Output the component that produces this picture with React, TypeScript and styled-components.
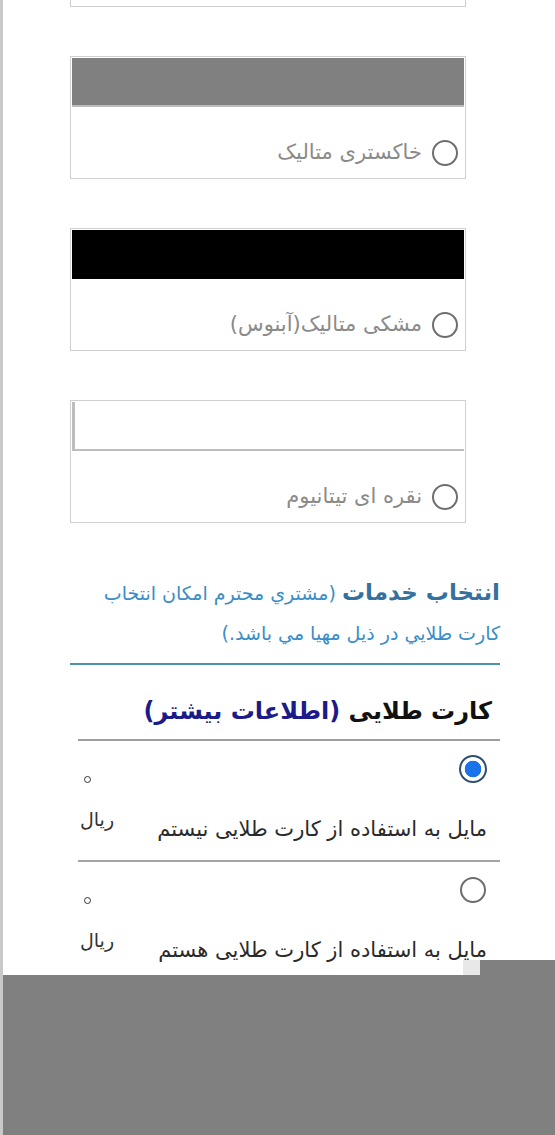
import React from 'react';
import styled, { createGlobalStyle } from 'styled-components';

const GlobalStyle = createGlobalStyle`
  html, body {
    margin: 0;
    padding: 0;
    background: #fff;
    font-family: "DejaVu Sans", "Noto Sans", sans-serif;
  }
  #root {
    min-height: 1135px;
  }
`;

const Page = styled.div`
  position: relative;
  width: 555px;
  height: 1135px;
  overflow: hidden;
  border-left: 3px solid #c9c9c9;
  box-sizing: border-box;
  background: #fff;
`;

const ColorList = styled.div`
  display: flex;
  flex-direction: column;
  gap: 49px;
  margin-top: -116px;
  margin-left: 67px;
`;

const ColorCard = styled.div`
  width: 396px;
  height: 123px;
  box-sizing: border-box;
  border: 1px solid #cfcfcf;
  padding: 1px;
  display: flex;
  flex-direction: column;
`;

const Swatch = styled.div<{ $color: string; $outlined?: boolean }>`
  height: 49px;
  background: ${(p) => p.$color};
  box-sizing: border-box;
  border-bottom: 2px solid ${(p) => (p.$color === '#000' ? '#000' : '#bdbdbd')};
  border-left: ${(p) => (p.$outlined ? '3px solid #bdbdbd' : 'none')};
`;

const ColorOption = styled.label`
  flex: 1;
  direction: rtl;
  display: flex;
  align-items: flex-end;
  gap: 10px;
  padding: 0 6px 11px 0;
  color: #8a8a8a;
  font-size: 21px;
  line-height: 28px;
`;

const RadioBox = styled.span`
  width: 28px;
  height: 28px;
  display: inline-flex;
  align-items: center;
  justify-content: center;
  flex-shrink: 0;
`;

const Radio = styled.span<{ $checked?: boolean }>`
  width: ${(p) => (p.$checked ? 28 : 26)}px;
  height: ${(p) => (p.$checked ? 28 : 26)}px;
  box-sizing: border-box;
  border-radius: 50%;
  border: 2px solid ${(p) => (p.$checked ? '#2f4f70' : '#6e6e6e')};
  background: ${(p) => (p.$checked ? 'radial-gradient(circle, #1a73e8 0 8px, #fff 8.6px)' : '#fff')};
  display: inline-block;
`;

const Services = styled.div`
  direction: rtl;
  width: 430px;
  margin: 49px 0 0 67px;
`;

const ServicesText = styled.p`
  margin: 0;
  padding: 0 0 10px 0;
  color: #3a8dc8;
  font-size: 19px;
  line-height: 40px;
  border-bottom: 2px solid #4a94a4;
`;

const ServicesTitle = styled.span`
  color: #34719f;
  font-size: 23px;
  font-weight: bold;
`;

const GoldSection = styled.div`
  direction: rtl;
  width: 422px;
  margin-left: 75px;
`;

const GoldTitle = styled.h3`
  margin: 0;
  padding: 0 8px 0 0;
  height: 74px;
  line-height: 92px;
  font-size: 24px;
  font-weight: bold;
  color: #111;
  border-bottom: 2px solid #9e9e9e;
`;

const MoreInfo = styled.span`
  color: #1b1b8a;
`;

const OptionRow = styled.div<{ $last?: boolean }>`
  display: grid;
  grid-template-columns: 1fr auto;
  height: 119px;
  border-bottom: ${(p) => (p.$last ? 'none' : '2px solid #a5a5a5')};
`;

const OptionMain = styled.div`
  display: flex;
  flex-direction: column;
  align-items: flex-start;
  padding: 14px 13px 0 0;
`;

const OptionLabel = styled.div`
  margin: 34px 0 0 -6px;
  font-size: 21px;
  color: #2a2a2a;
`;

const Price = styled.div`
  display: flex;
  flex-direction: column;
  align-items: flex-end;
  width: 42px;
  padding: 35px 0 0 2px;
  color: #333;
  font-size: 19px;
`;

const PriceValue = styled.span`
  display: block;
  width: 5px;
  height: 5px;
  margin: 0 0 25px 4px;
  border: 1.5px solid #333;
  border-radius: 50%;
  color: transparent;
  font-size: 5px;
  line-height: 5px;
  overflow: hidden;
`;

const BottomSheet = styled.div`
  position: absolute;
  left: -3px;
  right: 0;
  bottom: 0;
  height: 160px;
  background: #808080;
`;

const SheetTab = styled.div`
  position: absolute;
  right: 0;
  bottom: 160px;
  width: 75px;
  height: 15px;
  background: #808080;

  &::before {
    content: '';
    position: absolute;
    left: -17px;
    top: 0;
    width: 17px;
    height: 15px;
    background: #e8e8e8;
  }
`;

const colors = [
  { name: 'سفید', color: '#fff', outlined: false },
  { name: 'خاکستری متالیک', color: '#808080', outlined: false },
  { name: 'مشکی متالیک(آبنوس)', color: '#000', outlined: false },
  { name: 'نقره ای تیتانیوم', color: '#fff', outlined: true },
];

const options = [
  { label: 'مایل به استفاده از کارت طلایی نیستم', checked: true },
  { label: 'مایل به استفاده از کارت طلایی هستم', checked: false },
];

const App: React.FC = () => {
  return (
    <>
      <GlobalStyle />
      <Page>
        <ColorList>
          {colors.map((c) => (
            <ColorCard key={c.name}>
              <Swatch $color={c.color} $outlined={c.outlined} />
              <ColorOption>
                <Radio />
                <span>{c.name}</span>
              </ColorOption>
            </ColorCard>
          ))}
        </ColorList>

        <Services>
          <ServicesText>
            <ServicesTitle>انتخاب خدمات</ServicesTitle> (مشتري محترم امکان انتخاب کارت طلايي در ذيل مهيا مي باشد.)
          </ServicesText>
        </Services>

        <GoldSection>
          <GoldTitle>
            کارت طلایی <MoreInfo>(اطلاعات بیشتر)</MoreInfo>
          </GoldTitle>
          {options.map((o, i) => (
            <OptionRow key={o.label} $last={i === options.length - 1}>
              <OptionMain>
                <RadioBox>
                  <Radio $checked={o.checked} />
                </RadioBox>
                <OptionLabel>{o.label}</OptionLabel>
              </OptionMain>
              <Price>
                <PriceValue>۰</PriceValue>
                <span>ریال</span>
              </Price>
            </OptionRow>
          ))}
        </GoldSection>

        <SheetTab />
        <BottomSheet />
      </Page>
    </>
  );
};

export default App;
